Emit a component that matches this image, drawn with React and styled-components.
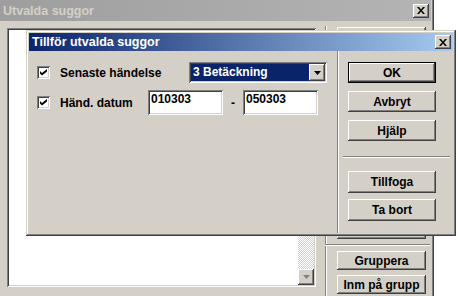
import styled, { createGlobalStyle, css } from "styled-components";

const face = "#d4d0c8";

const GlobalStyle = createGlobalStyle`
  body {
    margin: 0;
    background: #fff;
    font-family: "Liberation Sans", Arial, sans-serif;
  }
`;

const raised = css`
  box-shadow: inset -1px -1px #404040, inset 1px 1px #fff,
    inset -2px -2px #808080, inset 2px 2px ${face};
`;

const frame = css`
  box-shadow: inset -1px -1px #404040, inset 1px 1px ${face},
    inset -2px -2px #808080, inset 2px 2px #fff;
`;

const sunken = css`
  box-shadow: inset 1px 1px #808080, inset -1px -1px #fff,
    inset 2px 2px #404040, inset -2px -2px ${face};
`;

const Desktop = styled.div`
  position: relative;
  width: 458px;
  height: 296px;
  overflow: hidden;
  background: #fff;
`;

const Window = styled.div`
  position: absolute;
  left: ${(p) => p.$x}px;
  top: ${(p) => p.$y}px;
  width: ${(p) => p.$w}px;
  height: ${(p) => p.$h}px;
  box-sizing: border-box;
  padding: 3px;
  background: ${face};
  display: flex;
  flex-direction: column;
  ${frame}
`;

const TitleBar = styled.div`
  flex-shrink: 0;
  height: ${(p) => p.$h}px;
  display: flex;
  align-items: center;
  justify-content: space-between;
  padding: 0 2px 0 3px;
  font-size: 12.5px;
  font-weight: bold;
  background: ${(p) =>
    p.$active
      ? "linear-gradient(90deg, #0a246a, #a6caf0)"
      : "linear-gradient(90deg, #9e9e9e, #b4b4b4)"};
  color: ${(p) => (p.$active ? "#fff" : face)};
`;

const CloseBox = styled.div`
  width: 16px;
  height: 14px;
  background: ${face};
  display: flex;
  align-items: center;
  justify-content: center;
  ${raised}
`;

const BackBody = styled.div`
  flex: 1;
  display: flex;
  padding-left: 7px;
`;

const ListBox = styled.div`
  margin-top: 7px;
  width: 309px;
  height: 259px;
  box-sizing: border-box;
  padding: 2px;
  background: #fff;
  display: flex;
  justify-content: flex-end;
  ${sunken}
`;

const ScrollBar = styled.div`
  width: 16px;
  display: flex;
  flex-direction: column;
  justify-content: space-between;
  background: repeating-conic-gradient(${face} 0 25%, #fff 0 50%) 0 0 / 2px 2px;
`;

const ScrollButton = styled.div`
  width: 16px;
  height: 16px;
  background: ${face};
  display: flex;
  align-items: center;
  justify-content: center;
  ${raised}
`;

const VEtch = styled.div`
  align-self: stretch;
  width: 0;
  margin: ${(p) => p.$m};
  border-left: 1px solid #808080;
  border-right: 1px solid #fff;
`;

const HEtch = styled.div`
  height: 0;
  margin: ${(p) => p.$m};
  border-top: 1px solid #808080;
  border-bottom: 1px solid #fff;
`;

const ButtonColumn = styled.div`
  display: flex;
  flex-direction: column;
  width: ${(p) => p.$w}px;
  margin-left: ${(p) => p.$ml}px;
  padding: ${(p) => p.$pad};
`;

const Spacer = styled.div`
  flex: 1;
`;

const Button = styled.div`
  box-sizing: border-box;
  height: ${(p) => p.$h}px;
  margin-top: ${(p) => p.$mt || 0}px;
  background: ${face};
  display: flex;
  align-items: center;
  justify-content: center;
  font-size: 12px;
  font-weight: bold;
  color: #000;
  border: ${(p) => (p.$default ? "1px solid #000" : "none")};
  ${raised}
`;

const DialogBody = styled.div`
  flex: 1;
  display: flex;
`;

const LeftPane = styled.div`
  width: 308px;
  box-sizing: border-box;
  padding: 11px 0 0 8px;
  display: flex;
  flex-direction: column;
  gap: 7px;
`;

const Row = styled.div`
  display: flex;
  align-items: center;
  height: ${(p) => p.$h}px;
`;

const CheckBox = styled.div`
  width: 13px;
  height: 13px;
  box-sizing: border-box;
  margin-right: 10px;
  background: #fff;
  display: flex;
  align-items: center;
  justify-content: center;
  ${sunken}
`;

const Label = styled.span`
  width: ${(p) => p.$w}px;
  font-size: 12px;
  font-weight: bold;
  color: #000;
`;

const Combo = styled.div`
  width: 138px;
  height: 21px;
  box-sizing: border-box;
  padding: 2px;
  background: #fff;
  display: flex;
  ${sunken}
`;

const ComboValue = styled.div`
  flex: 1;
  background: #0a246a;
  color: #fff;
  font-size: 12px;
  font-weight: bold;
  line-height: 17px;
  padding-left: 2px;
`;

const DropButton = styled(ScrollButton)`
  height: 17px;
`;

const Edit = styled.div`
  width: 75px;
  height: 25px;
  box-sizing: border-box;
  padding: 2px 3px;
  background: #fff;
  font-size: 12px;
  font-weight: bold;
  line-height: 14px;
  color: #000;
  ${sunken}
`;

const Dash = styled.span`
  width: 20px;
  text-align: center;
  font-size: 12px;
  font-weight: bold;
`;

const CloseIcon = () => (
  <svg width="8" height="7" viewBox="0 0 8 7">
    <path d="M0 0h2l2 2.5L6 0h2L5 3.5 8 7H6L4 4.5 2 7H0l3-3.5z" fill="#000" />
  </svg>
);

const Check = () => (
  <svg width="7" height="7" viewBox="0 0 7 7">
    <path d="M0 2l2 2 5-4v2.5L2 6.5 0 4.5z" fill="#000" />
  </svg>
);

const Arrow = ({ color = "#000", up }) => (
  <svg width="7" height="4" viewBox="0 0 7 4">
    <path d={up ? "M0 4h7L3.5 0z" : "M0 0h7L3.5 4z"} fill={color} />
  </svg>
);

export default function App() {
  return (
    <Desktop>
      <GlobalStyle />

      <Window $x={-3} $y={-3} $w={437} $h={306}>
        <TitleBar $h={21}>
          Utvalda suggor
          <CloseBox>
            <CloseIcon />
          </CloseBox>
        </TitleBar>
        <BackBody>
          <ListBox>
            <ScrollBar>
              <ScrollButton>
                <Arrow color="#808080" up />
              </ScrollButton>
              <ScrollButton>
                <Arrow color="#808080" />
              </ScrollButton>
            </ScrollBar>
          </ListBox>
          <VEtch $m="5px 0 0 9px" />
          <ButtonColumn $w={89} $ml={10} $pad="6px 0 6px 0">
            <Button $h={19}>Lägg till</Button>
            <Spacer />
            <Button $h={19}>Ta bort</Button>
            <HEtch $m="5px -4px 5px -12px" />
            <Button $h={19}>Gruppera</Button>
            <Button $h={19} $mt={5}>
              Inm på grupp
            </Button>
          </ButtonColumn>
        </BackBody>
      </Window>

      <Window $x={26} $y={30} $w={430} $h={206}>
        <TitleBar $h={18} $active>
          Tillför utvalda suggor
          <CloseBox>
            <CloseIcon />
          </CloseBox>
        </TitleBar>
        <DialogBody>
          <LeftPane>
            <Row $h={21}>
              <CheckBox>
                <Check />
              </CheckBox>
              <Label $w={129}>Senaste händelse</Label>
              <Combo>
                <ComboValue>3 Betäckning</ComboValue>
                <DropButton>
                  <Arrow />
                </DropButton>
              </Combo>
            </Row>
            <Row $h={25}>
              <CheckBox>
                <Check />
              </CheckBox>
              <Label $w={88}>Händ. datum</Label>
              <Edit>010303</Edit>
              <Dash>-</Dash>
              <Edit>050303</Edit>
            </Row>
          </LeftPane>
          <VEtch $m="0" />
          <ButtonColumn $w={88} $ml={9} $pad="11px 0 0 0">
            <Button $h={21} $default>
              OK
            </Button>
            <Button $h={21} $mt={8}>
              Avbryt
            </Button>
            <Button $h={21} $mt={8}>
              Hjälp
            </Button>
            <HEtch $m="15px -14px 13px -5px" />
            <Button $h={22}>Tillfoga</Button>
            <Button $h={22} $mt={6}>
              Ta bort
            </Button>
          </ButtonColumn>
        </DialogBody>
      </Window>
    </Desktop>
  );
}
